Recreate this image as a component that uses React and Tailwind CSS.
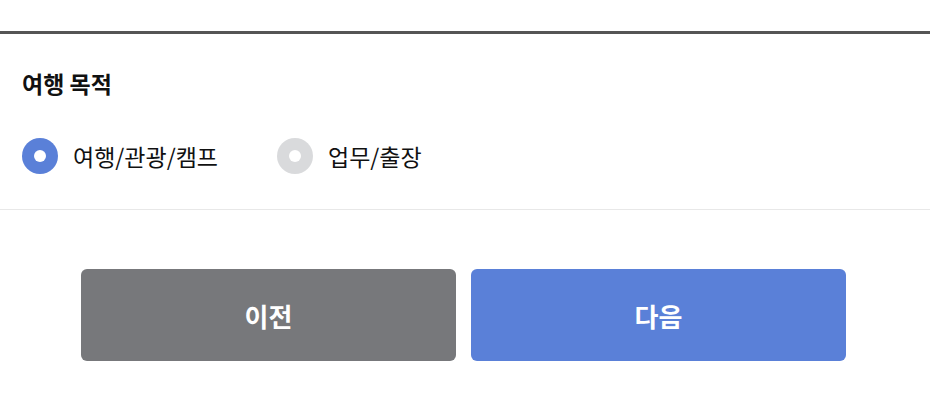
import { useState } from "react";

const options = ["여행/관광/캠프", "업무/출장"];

export default function App() {
  const [purpose, setPurpose] = useState(0);

  return (
    <div
      className="w-[930px] h-[408px] bg-white text-[#111]"
      style={{ fontFamily: '"Noto Sans CJK KR", "Noto Sans", sans-serif' }}
    >
      <div className="h-[31px]" />
      <div className="h-[3px] bg-[#555555]" />

      <div className="px-[22px] pt-[33px]">
        <h2 className="text-[23px] font-bold leading-[32px]">여행 목적</h2>

        <div className="flex items-center gap-[59px] mt-[39px] h-[36px]">
          {options.map((label, i) => (
            <button
              key={label}
              onClick={() => setPurpose(i)}
              className="flex items-center gap-[15px]"
            >
              <span
                className={`w-[36px] h-[36px] rounded-full flex items-center justify-center ${
                  purpose === i ? "bg-[#5a80d8]" : "bg-[#d9dadc]"
                }`}
              >
                <span className="w-[12px] h-[12px] rounded-full bg-white" />
              </span>
              <span className="text-[23px] leading-[32px]">{label}</span>
            </button>
          ))}
        </div>
      </div>

      <div className="h-px bg-[#e8e8e8] mt-[35px]" />

      <div className="flex gap-[15px] pl-[81px] mt-[59px]">
        <button className="w-[375px] h-[92px] rounded-[6px] bg-[#77787b] text-white text-[26px] font-bold">
          이전
        </button>
        <button className="w-[375px] h-[92px] rounded-[6px] bg-[#5a80d8] text-white text-[26px] font-bold">
          다음
        </button>
      </div>
    </div>
  );
}
